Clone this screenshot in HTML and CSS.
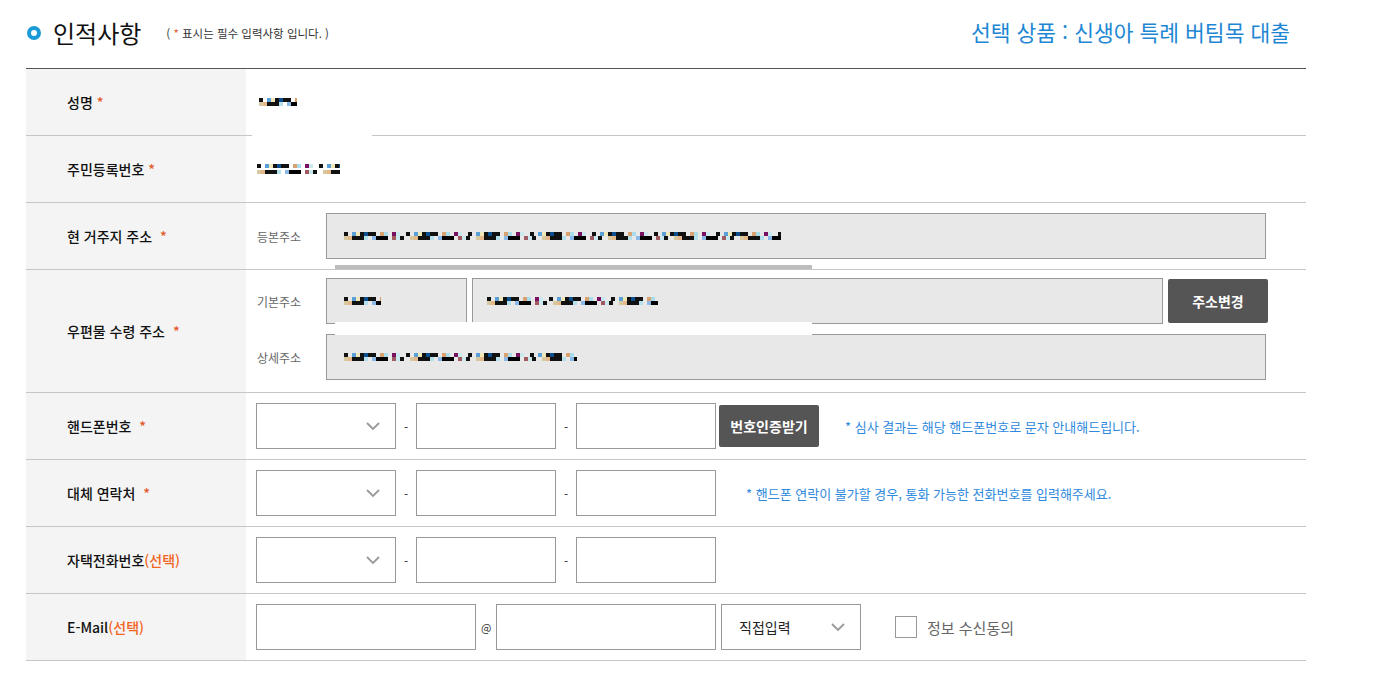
FILE: index.html
```html
<!DOCTYPE html>
<html lang="ko">
<head>
<meta charset="utf-8">
<title>인적사항</title>
<link rel="stylesheet" href="styles.css">
</head>
<body>
<div class="page">
  <div class="head">
    <div class="title">
      <span class="dot"></span>
      <h2>인적사항</h2>
      <span class="note">( <em>*</em> 표시는 필수 입력사항 입니다. )</span>
    </div>
    <div class="product">선택 상품 : 신생아 특례 버팀목 대출</div>
  </div>

  <div class="form">
    <div class="row">
      <div class="th">성명<i class="req">*</i></div>
      <div class="td"><span class="mask m1"></span></div>
    </div>
    <div class="row">
      <div class="th">주민등록번호<i class="req">*</i></div>
      <div class="td"><span class="mask m2"></span></div>
    </div>
    <div class="row">
      <div class="th">현 거주지 주소 <i class="req">*</i></div>
      <div class="td">
        <span class="sub">등본주소</span>
        <div class="field wide"><span class="mask m3"></span></div>
      </div>
    </div>
    <div class="row tall">
      <div class="th">우편물 수령 주소 <i class="req">*</i></div>
      <div class="td col">
        <div class="line">
          <span class="sub">기본주소</span>
          <div class="field zip"><span class="mask m4"></span></div>
          <div class="field base"><span class="mask m5"></span></div>
          <button class="btn addr">주소변경</button>
        </div>
        <div class="line gap">
          <span class="sub">상세주소</span>
          <div class="field wide"><span class="mask m6"></span></div>
        </div>
      </div>
    </div>
    <div class="row">
      <div class="th">핸드폰번호 <i class="req">*</i></div>
      <div class="td">
        <div class="select"><span></span><svg width="14" height="8" viewBox="0 0 14 8"><path d="M1 1L7 7L13 1" fill="none" stroke="#9a9a9a" stroke-width="1.8"/></svg></div>
        <span class="sep">-</span>
        <div class="input"></div>
        <span class="sep">-</span>
        <div class="input"></div>
        <button class="btn verify">번호인증받기</button>
        <span class="hint h1">* 심사 결과는 해당 핸드폰번호로 문자 안내해드립니다.</span>
      </div>
    </div>
    <div class="row">
      <div class="th">대체 연락처 <i class="req">*</i></div>
      <div class="td">
        <div class="select"><span></span><svg width="14" height="8" viewBox="0 0 14 8"><path d="M1 1L7 7L13 1" fill="none" stroke="#9a9a9a" stroke-width="1.8"/></svg></div>
        <span class="sep">-</span>
        <div class="input"></div>
        <span class="sep">-</span>
        <div class="input"></div>
        <span class="hint h2">* 핸드폰 연락이 불가할 경우, 통화 가능한 전화번호를 입력해주세요.</span>
      </div>
    </div>
    <div class="row">
      <div class="th">자택전화번호<span class="opt">(선택)</span></div>
      <div class="td">
        <div class="select"><span></span><svg width="14" height="8" viewBox="0 0 14 8"><path d="M1 1L7 7L13 1" fill="none" stroke="#9a9a9a" stroke-width="1.8"/></svg></div>
        <span class="sep">-</span>
        <div class="input"></div>
        <span class="sep">-</span>
        <div class="input"></div>
      </div>
    </div>
    <div class="row">
      <div class="th">E-Mail<span class="opt">(선택)</span></div>
      <div class="td">
        <div class="input mail"></div>
        <span class="sep at">@</span>
        <div class="input mail"></div>
        <div class="select domain"><span>직접입력</span><svg width="14" height="8" viewBox="0 0 14 8"><path d="M1 1L7 7L13 1" fill="none" stroke="#9a9a9a" stroke-width="1.8"/></svg></div>
        <span class="check"></span>
        <span class="agree">정보 수신동의</span>
      </div>
    </div>
  </div>

  <span class="cover c1"></span>
  <span class="cover c2"></span>
  <span class="cover c3"></span>
</div>
</body>
</html>
```

FILE: styles.css
```css
* { box-sizing: border-box; }

body {
  margin: 0;
  background: #fff;
  color: #111;
  font-family: "Noto Sans CJK KR", "Noto Sans", sans-serif;
}

.page {
  position: relative;
  width: 1306px;
  padding-left: 26px;
}

.head {
  height: 68px;
  display: flex;
  align-items: center;
  justify-content: space-between;
  padding-right: 16px;
  padding-bottom: 2px;
}

.title {
  display: flex;
  align-items: center;
}

.dot {
  width: 14px;
  height: 14px;
  margin-left: 1px;
  margin-right: 12px;
  border: 4px solid #1b9ad8;
  border-radius: 50%;
}

.title h2 {
  margin: 0;
  font-size: 24px;
  font-weight: 400;
  line-height: 1;
  color: #111;
}

.note {
  margin-left: 25px;
  font-size: 11.5px;
  color: #333;
}

.note em {
  font-style: normal;
  color: #e35b2a;
}

.product {
  font-size: 21.5px;
  color: #1e87d4;
  margin-bottom: 4px;
}

.form {
  border-top: 1px solid #555;
}

.row {
  display: grid;
  grid-template-columns: 220px 1fr;
  min-height: 67px;
  border-bottom: 1px solid #c6c6c6;
}

.row.tall {
  min-height: 123px;
}

.th {
  display: flex;
  align-items: center;
  padding-left: 41px;
  background: #f4f4f4;
  font-size: 14px;
  font-weight: 500;
  color: #111;
  white-space: pre;
}

.req {
  font-style: normal;
  color: #e35b2a;
  margin-left: 4px;
}

.opt {
  color: #f26522;
}

.td {
  display: flex;
  align-items: center;
  padding-left: 10px;
}

.td.col {
  flex-direction: column;
  align-items: flex-start;
  justify-content: flex-start;
  padding-top: 8px;
}

.line {
  display: flex;
  align-items: center;
}

.line.gap {
  margin-top: 10px;
}

.sub {
  width: 70px;
  padding-left: 1px;
  font-size: 12px;
  color: #666;
}

.field {
  height: 46px;
  display: flex;
  align-items: center;
  padding-left: 17px;
  background: #e8e8e8;
  border: 1px solid #999;
}

.field.wide { width: 940px; }
.field.zip { width: 141px; }
.field.base { width: 691px; margin-left: 5px; padding-left: 14px; }

.btn {
  border: 0;
  border-radius: 2px;
  background: #555;
  color: #fff;
  font-family: inherit;
  font-size: 14px;
  font-weight: 700;
  width: 100px;
  padding: 0;
}

.btn.addr {
  height: 44px;
  margin-left: 5px;
}

.btn.verify {
  height: 42px;
  margin-left: 3px;
}

.select {
  width: 140px;
  height: 46px;
  display: flex;
  align-items: center;
  justify-content: space-between;
  padding: 0 15px 0 17px;
  border: 1px solid #999;
  background: #fff;
  font-size: 14px;
  color: #222;
}

.select.domain {
  margin-left: 5px;
}

.input {
  width: 140px;
  height: 46px;
  border: 1px solid #999;
  background: #fff;
}

.input.mail {
  width: 220px;
}

.sep {
  width: 20px;
  text-align: center;
  font-size: 12px;
  color: #333;
}

.sep.at {
  font-size: 11px;
  text-align: left;
  padding-left: 5px;
}

.hint {
  font-size: 13px;
  color: #2f8ade;
}

.hint.h1 { margin-left: 26px; }
.hint.h2 { margin-left: 30px; }

.check {
  width: 22px;
  height: 22px;
  margin-left: 34px;
  border: 1px solid #999;
  background: #fff;
}

.agree {
  margin-left: 10px;
  font-size: 15px;
  color: #666;
}

/* pixelated (masked) personal data */
.mask {
  display: inline-block;
  height: 12px;
  background-image:
    repeating-linear-gradient(90deg, #111 0 4px, transparent 4px 8px, #5aa0d8 8px 12px, #f0e8b8 12px 16px, #111 16px 20px, #0b4f8f 20px 24px, #111 24px 32px, transparent 32px 36px, #d9a070 36px 40px, #a8dcea 40px 44px, transparent 44px 48px, #7a1060 48px 52px, #c9e9ef 52px 56px, transparent 56px 62px),
    repeating-linear-gradient(90deg, #d8c8a0 0 4px, #e4b888 4px 8px, #111 8px 20px, #b3e0ea 20px 24px, transparent 24px 28px, #8ab8e8 28px 32px, #000 32px 44px, transparent 44px 48px, #a05a60 48px 52px, #c9e9ef 52px 56px, #111 56px 60px, transparent 60px 66px);
  background-size: 100% 4px, 100% 4px;
  background-position: 0 2px, 0 6px;
  background-repeat: no-repeat;
}

.m1 { width: 38px; margin-left: 3px; }
.m2 { width: 83px; margin-left: 1px; height: 16px; background-position: 0 3px, 0 9px; }
.m3 { width: 437px; }
.m4 { width: 37px; }
.m5 { width: 171px; }
.m6 { width: 233px; }

/* redaction artifacts lying over the form */
.cover {
  position: absolute;
  display: block;
}

.c1 {
  left: 252px;
  top: 130px;
  width: 120px;
  height: 6px;
  background: #fff;
}

.c2 {
  left: 335px;
  top: 265px;
  width: 477px;
  height: 4px;
  background: #bdbdbd;
}

.c3 {
  left: 335px;
  top: 322px;
  width: 477px;
  height: 13px;
  background: #fff;
}
```
